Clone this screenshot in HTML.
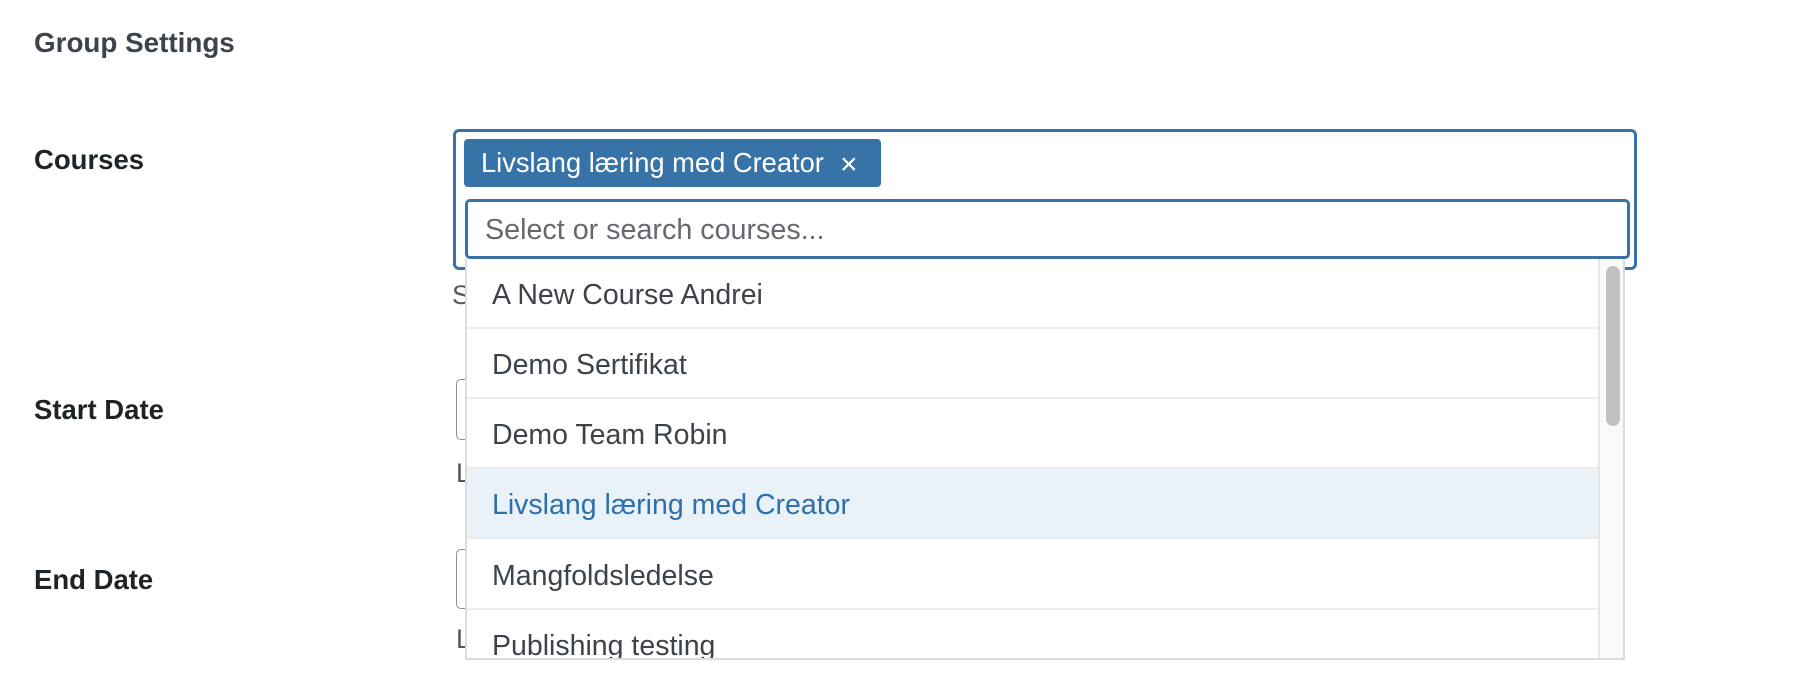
<!DOCTYPE html>
<html><head><meta charset="utf-8"><style>
*{box-sizing:border-box;margin:0;padding:0}
body{width:1800px;height:694px;background:#fff;font-family:"Liberation Sans",Arial,sans-serif;position:relative;overflow:hidden;color:#3c434a}
.a{position:absolute;white-space:nowrap}
.lbl{font-size:27.5px;font-weight:bold;color:#1d2327;line-height:30px}
.item{position:absolute;left:0;width:1131px;height:70px;border-bottom:2px solid #ececec;font-size:28.5px;color:#3c434a;padding-left:25px;line-height:72px}
</style></head><body>
<div class="a" style="left:34px;top:27px;font-size:27.8px;font-weight:bold;color:#3c434a">Group Settings</div>
<div class="a lbl" style="left:34px;top:145px">Courses</div>
<div class="a lbl" style="left:34px;top:395px">Start Date</div>
<div class="a lbl" style="left:34px;top:565px">End Date</div>

<div class="a" style="left:452px;top:280px;font-size:27px;color:#50575e">S</div>
<div class="a" style="left:456px;top:379px;width:60px;height:61px;border:1px solid #8c8f94;border-radius:5px"></div>
<div class="a" style="left:456px;top:458px;font-size:27px;color:#50575e">L</div>
<div class="a" style="left:456px;top:549px;width:60px;height:60px;border:1px solid #8c8f94;border-radius:5px"></div>
<div class="a" style="left:456px;top:624px;font-size:27px;color:#50575e">L</div>

<div class="a" style="left:453px;top:129px;width:1184px;height:141px;border:3px solid #3872a8;border-radius:6px;background:#fff"></div>
<div class="a" style="left:464px;top:139px;width:417px;height:48px;background:#3873a8;border-radius:4px;color:#fff;font-size:27.3px;line-height:48px;padding-left:17px">Livslang læring med Creator<span style="position:absolute;left:376px;top:2px;font-size:30px">×</span></div>
<div class="a" style="left:465px;top:199px;width:1165px;height:60px;border:3px solid #3872a8;border-radius:5px;background:#fff;font-size:28.7px;color:#646970;line-height:56px;padding-left:17px">Select or search courses...</div>

<div class="a" style="left:465px;top:259px;width:1160px;height:401px;background:#fff;border:2px solid #dcdcde;border-top:none;overflow:hidden">
 <div class="item" style="top:0">A New Course Andrei</div>
 <div class="item" style="top:70px">Demo Sertifikat</div>
 <div class="item" style="top:140px">Demo Team Robin</div>
 <div class="item" style="top:210px;background:#eaf2f9;color:#2f6fab">Livslang læring med Creator</div>
 <div class="item" style="top:281px">Mangfoldsledelse</div>
 <div class="item" style="top:351px">Publishing testing</div>
 <div style="position:absolute;left:1131px;top:0;width:27px;height:401px;background:#f9f9f9;border-left:2px solid #e6e6e6"></div>
 <div style="position:absolute;left:1139px;top:7px;width:14px;height:160px;background:#c1c1c1;border-radius:7px"></div>
</div>
</body></html>
